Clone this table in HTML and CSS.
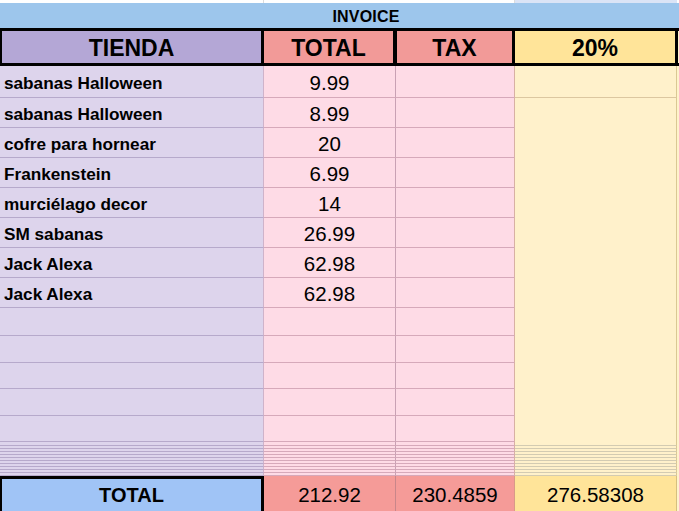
FILE: index.html
```html
<!DOCTYPE html>
<html lang="es">
<head>
<meta charset="utf-8">
<title>Invoice</title>
<link rel="stylesheet" href="styles.css">
</head>
<body>
<div class="sheet">
  <div class="row strip"><div class="c a"></div><div class="c b"></div><div class="c t"></div><div class="c d"></div><div class="c e"></div></div>
  <div class="title">INVOICE</div>
  <div class="row head">
    <div class="c a">TIENDA</div><div class="c b">TOTAL</div><div class="c t">TAX</div><div class="c d">20%</div><div class="c e"></div>
  </div>
  <div class="row item first"><div class="c a">sabanas Halloween</div><div class="c b">9.99</div><div class="c t"></div><div class="c d"></div><div class="c e"></div></div>
  <div class="row item"><div class="c a">sabanas Halloween</div><div class="c b">8.99</div><div class="c t"></div><div class="c d"></div><div class="c e"></div></div>
  <div class="row item"><div class="c a">cofre para hornear</div><div class="c b">20</div><div class="c t"></div><div class="c d"></div><div class="c e"></div></div>
  <div class="row item"><div class="c a">Frankenstein</div><div class="c b">6.99</div><div class="c t"></div><div class="c d"></div><div class="c e"></div></div>
  <div class="row item"><div class="c a">murciélago decor</div><div class="c b">14</div><div class="c t"></div><div class="c d"></div><div class="c e"></div></div>
  <div class="row item"><div class="c a">SM sabanas</div><div class="c b">26.99</div><div class="c t"></div><div class="c d"></div><div class="c e"></div></div>
  <div class="row item"><div class="c a">Jack Alexa</div><div class="c b">62.98</div><div class="c t"></div><div class="c d"></div><div class="c e"></div></div>
  <div class="row item"><div class="c a">Jack Alexa</div><div class="c b">62.98</div><div class="c t"></div><div class="c d"></div><div class="c e"></div></div>
  <div class="row item h28"><div class="c a"></div><div class="c b"></div><div class="c t"></div><div class="c d"></div><div class="c e"></div></div>
  <div class="row item h27"><div class="c a"></div><div class="c b"></div><div class="c t"></div><div class="c d"></div><div class="c e"></div></div>
  <div class="row item h26"><div class="c a"></div><div class="c b"></div><div class="c t"></div><div class="c d"></div><div class="c e"></div></div>
  <div class="row item h27"><div class="c a"></div><div class="c b"></div><div class="c t"></div><div class="c d"></div><div class="c e"></div></div>
  <div class="row item h26"><div class="c a"></div><div class="c b"></div><div class="c t"></div><div class="c d"></div><div class="c e"></div></div>
  <div class="row tiny h4"><div class="c a"></div><div class="c b"></div><div class="c t"></div><div class="c d"></div><div class="c e"></div></div>
  <div class="row tiny"><div class="c a"></div><div class="c b"></div><div class="c t"></div><div class="c d"></div><div class="c e"></div></div>
  <div class="row tiny"><div class="c a"></div><div class="c b"></div><div class="c t"></div><div class="c d"></div><div class="c e"></div></div>
  <div class="row tiny"><div class="c a"></div><div class="c b"></div><div class="c t"></div><div class="c d"></div><div class="c e"></div></div>
  <div class="row tiny"><div class="c a"></div><div class="c b"></div><div class="c t"></div><div class="c d"></div><div class="c e"></div></div>
  <div class="row tiny"><div class="c a"></div><div class="c b"></div><div class="c t"></div><div class="c d"></div><div class="c e"></div></div>
  <div class="row tiny"><div class="c a"></div><div class="c b"></div><div class="c t"></div><div class="c d"></div><div class="c e"></div></div>
  <div class="row tiny"><div class="c a"></div><div class="c b"></div><div class="c t"></div><div class="c d"></div><div class="c e"></div></div>
  <div class="row tiny"><div class="c a"></div><div class="c b"></div><div class="c t"></div><div class="c d"></div><div class="c e"></div></div>
  <div class="row tiny"><div class="c a"></div><div class="c b"></div><div class="c t"></div><div class="c d"></div><div class="c e"></div></div>
  <div class="row tiny"><div class="c a"></div><div class="c b"></div><div class="c t"></div><div class="c d"></div><div class="c e"></div></div>
  <div class="row total">
    <div class="c a">TOTAL</div><div class="c b">212.92</div><div class="c t">230.4859</div><div class="c d">276.58308</div><div class="c e"></div>
  </div>
</div>
</body>
</html>
```

FILE: styles.css
```css
html, body {
  margin: 0;
  padding: 0;
  overflow: hidden;
}
body {
  font-family: "Liberation Sans", Arial, sans-serif;
  color: #000;
  background: #fff;
}
.sheet {
  width: 679px;
  height: 511px;
  overflow: hidden;
}
.row {
  display: grid;
  grid-template-columns: 264px 132px 119px 162px 2px;
}
.c {
  box-sizing: border-box;
  display: flex;
  align-items: center;
  justify-content: center;
  white-space: nowrap;
  overflow: hidden;
}

/* top strip */
.strip { height: 3px; }
.strip .a { border-right: 1px solid #dcdcdc; }
.strip .t { border-right: 1px solid #dcdcdc; }
.strip .d { background: #dbe4f6; }

/* merged title */
.title {
  box-sizing: border-box;
  height: 25px;
  background: #9dc6ec;
  font-weight: bold;
  font-size: 16px;
  line-height: 25px;
  padding: 1px 0 0 53px;
  text-align: center;
  letter-spacing: 0.2px;
}

/* header row */
.head {
  height: 38px;
  background: #000;
  font-weight: bold;
  font-size: 23px;
}
.head .c { padding-top: 2px; }
.head .a { margin: 3px 3px 3px 2px; background: #b4a7d6; }
.head .b { margin: 3px 3px 3px 0; background: #f29a98; }
.head .t { margin: 3px 3px 3px 1px; background: #f29a98; }
.head .d { margin: 3px 2px 3px 0; background: #ffe499; }
.head .e { margin: 3px 0 3px 1px; background: #fff2cc; }

/* data rows */
.item { height: 30px; }
.item.first { height: 32px; }
.item.h28 { height: 28px; }
.item.h27 { height: 27px; }
.item.h26 { height: 26px; }
.item .a,
.tiny .a {
  background: #ddd4ec;
  border-right: 1px solid #cfb3ca;
  border-bottom: 1px solid #b6a9cb;
}
.item .a {
  justify-content: flex-start;
  padding: 3px 0 0 4px;
  font-weight: bold;
  font-size: 17.2px;
}
.item .b, .item .t,
.tiny .b, .tiny .t {
  background: #fedbe6;
  border-bottom: 1px solid #d6a9ba;
}
.item .b, .tiny .b { border-right: 1px solid #c9a1b4; }
.item .t, .tiny .t { border-right: 1px solid #d8b1a3; }
.item .b { font-size: 20.5px; padding-top: 2px; }
.item .d, .tiny .d {
  background: #fff1cb;
  border-right: 1px solid #dac893;
}
.item.first .d { border-bottom: 1px solid #dcc7a0; }
.item .e, .tiny .e { background: #fff2cc; }

.tiny { height: 3px; }
.tiny.h4 { height: 4px; }
.tiny .d { border-bottom: 1px solid #d3cbb2; }

/* total row */
.total {
  height: 35px;
  font-size: 20.5px;
}
.total .c { padding-top: 3px; }
.total .a {
  background: #a0c4f6;
  border-top: 3px solid #000;
  border-left: 2px solid #000;
  border-right: 3px solid #000;
  font-weight: bold;
  font-size: 20px;
  padding-top: 0;
}
.total .b {
  background: #f59b98;
  border-right: 1px solid #c9868a;
}
.total .t {
  background: #f59b98;
  border-right: 1px solid #d99a88;
}
.total .d {
  background: #ffe499;
  border-right: 1px solid #d6c07e;
}
.total .e { background: #fff2cc; }
```
